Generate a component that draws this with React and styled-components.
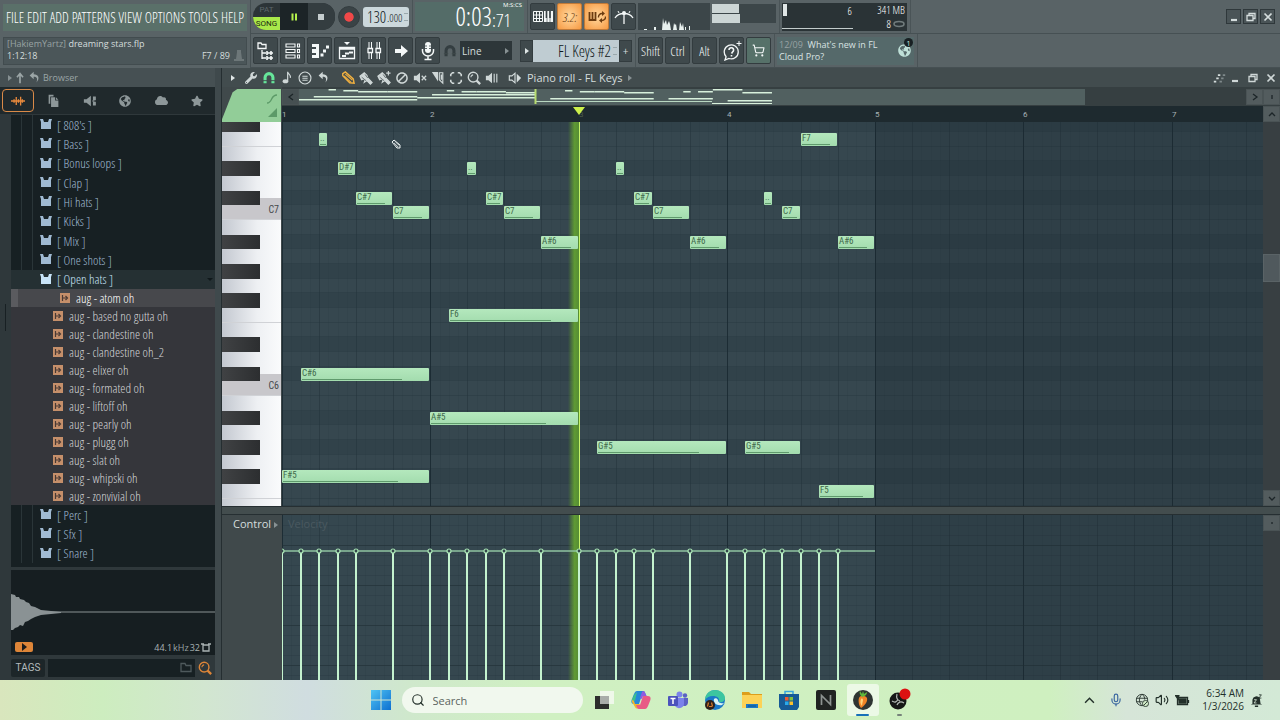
import React, { useState } from 'react';
import styled, { createGlobalStyle } from 'styled-components';
import { FaWrench, FaStar, FaCloud, FaGlobeAmericas, FaBan } from 'react-icons/fa';
import { LuSearch, LuMic, LuVolume2, LuShoppingCart } from 'react-icons/lu';

const ROW = 44 / 3;
const BAR = 593 / 4;
const STEP = BAR / 16;
const FIRST_ROW = 10;
const NAMES = ['F', 'E', 'D#', 'D', 'C#', 'C', 'B', 'A#', 'A', 'G#', 'G', 'F#'];

const rowTop = (n) => Math.round(FIRST_ROW + n * ROW);
const stepX = (s) => Math.round(s * STEP);

// row: semitones below F7, start and length in 16ths of a bar
const notes = [
  { row: 0, start: 4, length: 1 },
  { row: 2, start: 6, length: 2, name: 'D#7' },
  { row: 4, start: 8, length: 4, name: 'C#7' },
  { row: 5, start: 12, length: 4, name: 'C7' },
  { row: 2, start: 20, length: 1 },
  { row: 4, start: 22, length: 2, name: 'C#7' },
  { row: 5, start: 24, length: 4, name: 'C7' },
  { row: 7, start: 28, length: 4, name: 'A#6' },
  { row: 12, start: 18, length: 14, name: 'F6' },
  { row: 16, start: 2, length: 14, name: 'C#6' },
  { row: 19, start: 16, length: 16, name: 'A#5' },
  { row: 23, start: 0, length: 16, name: 'F#5' },
  { row: 2, start: 36, length: 1 },
  { row: 4, start: 38, length: 2, name: 'C#7' },
  { row: 5, start: 40, length: 4, name: 'C7' },
  { row: 7, start: 44, length: 4, name: 'A#6' },
  { row: 21, start: 34, length: 14, name: 'G#5' },
  { row: 21, start: 50, length: 6, name: 'G#5' },
  { row: 4, start: 52, length: 1 },
  { row: 5, start: 54, length: 2, name: 'C7' },
  { row: 0, start: 56, length: 4, name: 'F7' },
  { row: 7, start: 60, length: 4, name: 'A#6' },
  { row: 24, start: 58, length: 6, name: 'F5' },
];

const velocities = [0, 2, 4, 6, 8, 12, 16, 18, 20, 22, 24, 28, 32, 34, 36, 38, 40, 44, 48, 50, 52, 54, 56, 58, 60];

const lanes = Array.from({ length: 27 }, (_, i) => {
  const n = i - 1;
  const name = NAMES[(n + 12) % 12];
  const top = Math.max(0, rowTop(n));
  const bottom = Math.min(384, rowTop(n + 1));
  return { id: i, name, black: name.includes('#'), height: bottom - top, octave: n < 6 ? 7 : n < 18 ? 6 : 5 };
});

const foldersAbove = ["808's", 'Bass', 'Bonus loops', 'Clap', 'Hi hats', 'Kicks', 'Mix', 'One shots', 'Open hats'];
const foldersBelow = ['Perc', 'Sfx', 'Snare'];
const samples = [
  'atom oh', 'based no gutta oh', 'clandestine oh', 'clandestine oh_2', 'elixer oh', 'formated oh',
  'liftoff oh', 'pearly oh', 'plugg oh', 'slat oh', 'whipski oh', 'zonvivial oh',
];
const menus = ['FILE', 'EDIT', 'ADD', 'PATTERNS', 'VIEW', 'OPTIONS', 'TOOLS', 'HELP'];

const Svg = ({ size = 16, w, h, box = '0 0 16 16', children, ...rest }) => (
  <svg width={w || size} height={h || size} viewBox={box} fill="none" stroke="currentColor" strokeWidth="1.3" aria-hidden="true" {...rest}>
    {children}
  </svg>
);

const icons = {
  browser: (
    <Svg size={20} box="0 0 20 20">
      <path d="M2 2h3l1 1.500h4v4H2z" />
      <path d="M6 9v9M6 12h4M6 17h4" />
      <path d="M11 10v4M11 12h6M15 10v4M11 15v4M11 17h6M15 15v4" strokeWidth="1.600" />
    </Svg>
  ),
  rack: (
    <Svg size={20} box="0 0 20 20">
      <path d="M3 3h9v3H3zM3 8.500h9v3H3zM3 14h9v3H3zM14.500 3h2v3h-2zM14.500 8.500h2v3h-2zM14.500 14h2v3h-2z" strokeWidth="1.100" />
    </Svg>
  ),
  piano: (
    <Svg size={20} box="0 0 20 20">
      <path d="M2 3h7v14H2v-3h4v-2H2V8h4V6H2z" fill="currentColor" stroke="none" />
      <path d="M10.500 14h3M13 10h3M16 6h3" strokeWidth="3" />
    </Svg>
  ),
  playlist: (
    <Svg size={20} box="0 0 20 20">
      <path d="M7 1h6l-3 3z" fill="currentColor" stroke="none" />
      <path d="M2.500 6.500h15v11h-15zM2.500 8h15" />
      <path d="M5 15h4M8 12.500h4M12 11.500h4" strokeWidth="1.800" />
    </Svg>
  ),
  mixer: (
    <Svg size={20} box="0 0 20 20">
      <path d="M5 1v6M5 12v6M7.500 1v6M7.500 12v6M13 1v6M13 12v6M15.500 1v6M15.500 12v6" strokeWidth="1" />
      <path d="M4 7.500h4.500v4H4zM12 7.500h4.500v4H12z" />
    </Svg>
  ),
  arrow: (
    <Svg size={20} box="0 0 20 20">
      <path d="M4 8h6V4l7 6-7 6v-4H4z" fill="currentColor" stroke="none" />
    </Svg>
  ),
  mic: (
    <Svg size={20} box="0 0 20 20">
      <rect x="7" y="1" width="6" height="11" rx="3" fill="currentColor" stroke="none" />
      <path d="M4.500 8v2a5.500 5 0 0 0 11 0V8M10 15v3M6.500 18.500h7" strokeWidth="1.500" />
      <path d="M7 5h2M7 7.500h2M11 5h2M11 7.500h2" stroke="#3a4448" strokeWidth=".8" />
    </Svg>
  ),
  typing: (
    <Svg w={20} h={12} box="0 0 20 12">
      <path d="M.5.5h9v10h-9zM3.500.5v10M6.500.5v10M.5 4h9M.5 7.500h9" strokeWidth="1" />
      <path d="M11 0h9v11h-9z" fill="currentColor" stroke="none" />
      <path d="M13.500 0v7M17 0v7" stroke="#364044" strokeWidth="1.700" />
      <path d="M14 7v4M17 7v4" stroke="#364044" strokeWidth=".6" />
    </Svg>
  ),
  blend: (
    <Svg w={18} h={12} box="0 0 18 12">
      <path d="M1.500 1v8h6V1M4.500 1v8" strokeWidth="1.800" />
      <path d="M10.500 6.500a3.500 3.500 0 0 1 3.500-4h1M17.500 5.500a3.500 3.500 0 0 1-3.500 4h-1" strokeWidth="1.400" />
      <path d="M14 0l3 2.500L14 5zM14 7l-3 2.500 3 2.500z" fill="currentColor" stroke="none" />
    </Svg>
  ),
  metro: (
    <Svg w={20} h={16} box="0 0 20 16">
      <path d="M1 9a10 8 0 0 1 18 0M10 3v12" />
      <circle cx="10" cy="4" r="2" fill="currentColor" stroke="none" />
      <path d="M5 4l-1-2M15 4l1-2" strokeWidth="1" />
    </Svg>
  ),
  help: (
    <Svg size={20} box="0 0 20 20">
      <path d="M4 16l-1 3 4-1.500a7 7 0 1 0-3-2z" />
      <path d="M7 9a2.300 2.300 0 1 1 3.500 2L9.500 12.500M9.500 14v1.500" strokeWidth="1.600" />
      <path d="M17 0v5M14.500 2.500h5" strokeWidth="1" />
    </Svg>
  ),
  magnet: (
    <Svg size={14}>
      <path d="M3.500 14V7.500a4.500 4.500 0 0 1 9 0V14" strokeWidth="3.500" />
      <path d="M1 11h5M10 11h5" stroke="#3f494c" strokeWidth="1" />
    </Svg>
  ),
  undo: (
    <Svg size={13}>
      <path d="M7 1L2 5.500 7 10V7c4 0 5 2 3.500 7C15 9 13 4 7 4z" fill="currentColor" stroke="none" />
    </Svg>
  ),
  up: (
    <Svg size={12}>
      <path d="M8 15V4M4 7l4-5 4 5" strokeWidth="2.200" />
    </Svg>
  ),
  note: (
    <Svg size={13}>
      <ellipse cx="5.500" cy="12.500" rx="3.500" ry="2.500" fill="currentColor" stroke="none" />
      <path d="M8.200 12V1c.5 3 4.500 3.500 3.300 7.500" strokeWidth="1.500" />
    </Svg>
  ),
  stamp: (
    <Svg size={14}>
      <circle cx="8" cy="8" r="6.800" />
      <path d="M5 6h6M5 8.300h6M5 10.600h6" />
    </Svg>
  ),
  pencil: (
    <Svg size={14}>
      <path d="M2 3l3-2 9 8 1 5-5-.5-8-8z" strokeWidth="1.600" />
      <path d="M3.500 5.500l8 7.500M5 3.500l8 7" />
    </Svg>
  ),
  brush: (
    <Svg size={14}>
      <path d="M1 6l5-4 3 3 1 3 5 5-2 2-4-4-3 2 1-3-2-1-2 1z" fill="currentColor" />
      <path d="M3 7l5 4M7 4l3 4" stroke="#3f494c" strokeWidth=".8" />
    </Svg>
  ),
  brushPlus: (
    <Svg size={14}>
      <path d="M1 6l5-4 3 3 1 3 5 5-2 2-4-4-3 2 1-3-2-1-2 1z" fill="currentColor" />
      <path d="M13 0v5M10.500 2.500h5" />
      <path d="M3 7l5 4M7 4l3 4" stroke="#3f494c" strokeWidth=".8" />
    </Svg>
  ),
  mute: (
    <Svg size={14}>
      <path d="M1 5.500h3L8 2v12l-4-3.500H1z" fill="currentColor" stroke="none" />
      <path d="M10 5.500l5 5M15 5.500l-5 5" strokeWidth="1.500" />
    </Svg>
  ),
  slice: (
    <Svg size={14}>
      <path d="M1 1h7v11z" fill="currentColor" stroke="none" />
      <path d="M9.500 2h4v12l-4-4z" />
      <path d="M11 4h2v6h-2z" fill="currentColor" stroke="none" />
    </Svg>
  ),
  select: (
    <Svg size={14}>
      <path d="M2 6V4l2-2h2M10 2h2l2 2v2M14 10v2l-2 2h-2M6 14H4l-2-2v-2" strokeWidth="1.800" />
    </Svg>
  ),
  zoom: (
    <Svg size={14}>
      <circle cx="7" cy="7" r="5.500" strokeWidth="1.600" />
      <path d="M4.500 7A2.500 2.500 0 0 1 7 4.500" />
      <path d="M11 11l4 4" strokeWidth="2.600" />
    </Svg>
  ),
  playback: (
    <Svg size={14}>
      <path d="M1 5.500h3L8 2v12l-4-3.500H1z" fill="currentColor" stroke="none" />
      <path d="M10.500 3v10M13.500 3v10" />
    </Svg>
  ),
  speaker: (
    <Svg size={14}>
      <path d="M1.500 5.500h3L8 2.500v11L4.500 10.500h-3z" />
      <path d="M10 3l5 5-5 5z" fill="currentColor" stroke="none" />
    </Svg>
  ),
  files: (
    <Svg size={13}>
      <path d="M2 1h6v2H4v9H2zM5 4h5v4h4v8H5zM11 4l3 3h-3z" fill="currentColor" stroke="none" />
    </Svg>
  ),
  plugin: (
    <Svg size={14}>
      <path d="M1 6h3l5-4v12l-5-4H1z" fill="currentColor" stroke="none" />
      <path d="M10.500 8h2.500M12 3.500h2v3h-2zM12 9.500h2v3h-2z" fill="currentColor" />
    </Svg>
  ),
  wave: (
    <Svg size={14}>
      <path d="M0 8h16M3.500 6v4M6 3.500v9M8.500 6v4M11 3v10M13 6v4" strokeWidth="1.500" />
    </Svg>
  ),
  restore: (
    <Svg size={10} box="0 0 10 10">
      <path d="M3 3V1.500h6v5H7M1 3.500h6v5H1z" />
    </Svg>
  ),
  close: (
    <Svg size={10} box="0 0 10 10">
      <path d="M1.500 1.500l7 7M8.500 1.500l-7 7" strokeWidth="1.700" />
    </Svg>
  ),
  minimize: (
    <Svg size={10} box="0 0 10 10">
      <path d="M2 8h6" strokeWidth="2.200" />
    </Svg>
  ),
};

const FolderIcon = () => (
  <Svg w={12} h={11} box="0 0 12 11">
    <path d="M0 0h3l1 3h4l1-3h3l-1 3v7H1V3z" fill="currentColor" stroke="none" />
  </Svg>
);

const SampleIcon = () => (
  <Svg size={10} box="0 0 10 10">
    <path d="M0 0h10v10H0z" fill="#c58f6a" stroke="none" />
    <path d="M2.500 2v6M5.500 3l2 2-2 2M2.500 5h4" stroke="#4a3a34" strokeWidth="1.200" />
  </Svg>
);

const Minimap = () => (
  <svg width="475" height="16" viewBox="0 0 475 16" aria-hidden="true">
    {notes.map((n) => (
      <rect key={`${n.row}-${n.start}`} x={n.start * 7.39} y={Math.round(n.row * 0.44)} width={n.length * 7.39} height="1.500" fill="#d8f0dc" />
    ))}
    <path d="M237 12.500h176" stroke="#b9d8c2" />
    <path d="M413 14.500h60" stroke="#d8f0dc" />
    <path d="M236.500 0v15" stroke="#b8dc70" strokeWidth="2" />
  </svg>
);

const GridLines = ({ rows }) => (
  <Lines aria-hidden="true">
    {Array.from({ length: 106 }, (_, i) => (
      <line
        key={i}
        x1={stepX(i) + 0.5}
        x2={stepX(i) + 0.5}
        y1="0"
        y2="100%"
        stroke={i % 16 === 0 ? '#1b2a32' : '#22313a'}
        strokeOpacity={i % 16 === 0 ? 0.9 : i % 4 === 0 ? 0.5 : 0.12}
      />
    ))}
    {rows && Array.from({ length: 16 }, (_, i) => (
      <line key={`r${i}`} x1="0" x2="100%" y1={i * 10 + 10.5} y2={i * 10 + 10.5} stroke="#1f2e36" strokeOpacity={i % 4 === 2 ? 0.6 : 0.2} />
    ))}
  </Lines>
);

const Velocities = () => (
  <Lines aria-hidden="true">
    <path d="M0 36H593" stroke="#8fc3a0" strokeWidth="1.500" />
    {velocities.map((s) => (
      <g key={s}>
        <line x1={stepX(s)} x2={stepX(s)} y1="38" y2="100%" stroke="#c4f3cf" strokeWidth="2" />
        <circle cx={stepX(s)} cy="36" r="2" fill="#33454b" stroke="#a6e2b2" strokeWidth="1.200" />
      </g>
    ))}
  </Lines>
);

const App = () => {
  const [mode, setMode] = useState('SONG');
  const [tempo, setTempo] = useState('130');
  const [selected, setSelected] = useState('atom oh');
  const [query, setQuery] = useState('');
  const [tag, setTag] = useState('');

  return (
    <Page>
      <GlobalStyle />
      <Header>
        <HeaderLeft>
          <MenuBar>
            {menus.map((menu) => <MenuItem key={menu}>{menu}</MenuItem>)}
          </MenuBar>
          <HintPanel>
            <HintText>
              <div><Dim>[HakiemYartz]</Dim> dreaming stars.flp</div>
              <HintLine><span>1:12:18</span><span>F7 / 89</span></HintLine>
            </HintText>
            <Svg w={10} h={13} box="0 0 10 13"><path d="M3 1h4v2l1 7h2v2H0v-2h2l1-7z" fill="#6d7779" stroke="none" /></Svg>
          </HintPanel>
        </HeaderLeft>
        <HeaderRows>
          <HeaderRow>
            <Group>
              <Transport>
                <ModeSwitch onClick={() => setMode(mode === 'SONG' ? 'PAT' : 'SONG')}>
                  <Mode $on={mode === 'PAT'}>PAT</Mode>
                  <Mode $on={mode === 'SONG'}>SONG</Mode>
                </ModeSwitch>
                <TransportButton $active aria-label="Pause">
                  <Svg size={10} box="0 0 10 10"><path d="M3.500 1.500v7M7 1.500v7" strokeWidth="2" /></Svg>
                </TransportButton>
                <TransportButton aria-label="Stop">
                  <Svg size={10} box="0 0 10 10"><path d="M2 2h6v6H2z" fill="currentColor" stroke="none" /></Svg>
                </TransportButton>
              </Transport>
              <Record aria-label="Record" />
              <Tempo>
                <TempoInput aria-label="Tempo" value={tempo} onChange={(e) => setTempo(e.target.value)} />
                <small>.000</small>
                <Spin />
              </Tempo>
            </Group>
            <Group>
              <Clock>
                <span>0:03</span>
                <ClockEnd><sup>M:S:CS</sup><small>:71</small></ClockEnd>
              </Clock>
            </Group>
            <Group $tight>
              <Tool aria-label="Typing keyboard">{icons.typing}</Tool>
              <Tool $lit aria-label="Countdown"><Count>3.2:</Count></Tool>
              <Tool $lit aria-label="Blend recording">{icons.blend}</Tool>
              <Tool aria-label="Metronome">{icons.metro}</Tool>
              <Scope>
                <svg width="72" height="27" viewBox="0 0 72 27" aria-hidden="true">
                  <path d="M6 27v-1h3v1zM16 27v-3h2v3zM24 27l1-12 1 6 2-4 1 5 2-4 1 3 1 6zM35 27l1-7 1 2 1-1 1 6zM41 27l1-8 2 5 1-4 1 7zM47 27v-3h1v3zM51 27v-4h1v4z" fill="#e8f0ee" />
                </svg>
              </Scope>
              <Meters><Meter $size="42%" /><Meter $size="44%" /></Meters>
            </Group>
            <Group>
              <Cpu>
                <CpuGraph><b /><span>6</span></CpuGraph>
                <CpuText><span>341 MB</span><span>8 <Svg w={12} h={8} box="0 0 12 8"><ellipse cx="6" cy="4" rx="5" ry="2.500" stroke="#707b7c" strokeWidth="1.600" /></Svg></span></CpuText>
              </Cpu>
            </Group>
            <Windows>
              <WindowButton aria-label="Minimize">{icons.minimize}</WindowButton>
              <WindowButton aria-label="Restore">{icons.restore}</WindowButton>
              <WindowButton aria-label="Close">{icons.close}</WindowButton>
            </Windows>
          </HeaderRow>
          <HeaderRow>
            <Group $tight>
              {['browser', 'rack', 'piano', 'playlist', 'mixer', 'arrow', 'mic'].map((name) => (
                <Tool key={name} aria-label={name}>{icons[name]}</Tool>
              ))}
              <SnapIcon>{icons.magnet}</SnapIcon>
              <Snap>
                <select aria-label="Snap"><option>Line</option></select>
                <Caret />
              </Snap>
              <Channel>
                <ChannelStep aria-label="Channel menu"><Caret $bright /></ChannelStep>
                <ChannelName>FL Keys #2<Spin /></ChannelName>
                <ChannelStep aria-label="Add channel">+</ChannelStep>
              </Channel>
            </Group>
            <Group $tight>
              <Tool>Shift</Tool>
              <Tool>Ctrl</Tool>
              <Tool>Alt</Tool>
              <Tool aria-label="Help">{icons.help}</Tool>
              <Tool $teal aria-label="Shop"><LuShoppingCart size={13} /></Tool>
            </Group>
            <Group>
              <News href="#news">
                <span><Dim>12/09</Dim>&nbsp; What&apos;s new in FL<br />Cloud Pro?</span>
                <Globe><FaGlobeAmericas size={13} /><i>1</i></Globe>
              </News>
            </Group>
          </HeaderRow>
        </HeaderRows>
      </Header>

      <Main>
        <Browser>
          <BrowserTitle><Caret />{icons.up}{icons.undo}<span>Browser</span></BrowserTitle>
          <Tabs>
            <Tab $active aria-label="All">{icons.wave}</Tab>
            <Tab aria-label="Project">{icons.files}</Tab>
            <Tab aria-label="Plugins">{icons.plugin}</Tab>
            <Tab aria-label="Online"><FaGlobeAmericas size={12} /></Tab>
            <Tab aria-label="Cloud"><FaCloud size={13} /></Tab>
            <Tab aria-label="Starred"><FaStar size={12} /></Tab>
          </Tabs>
          <BrowserBody>
            <Strip><StripThumb /></Strip>
            <BrowserContent>
              <Tree>
                <Folders $first>
                  {foldersAbove.map((name) => (
                    <Folder key={name} $open={name === 'Open hats'}>
                      <FolderIcon />[ {name} ]{name === 'Open hats' && <OpenMark />}
                    </Folder>
                  ))}
                </Folders>
                <Samples>
                  {samples.map((name) => (
                    <Sample key={name} $active={name === selected} onClick={() => setSelected(name)}>
                      <SampleIcon />aug - {name}
                    </Sample>
                  ))}
                </Samples>
                <Folders>
                  {foldersBelow.map((name) => <Folder key={name}><FolderIcon />[ {name} ]</Folder>)}
                </Folders>
              </Tree>
              <Preview>
                <svg width="100%" height="84" aria-hidden="true">
                  <path d="M0 24l4 1 1 2 3 0 1 2 4 1 2 2 3 1 2 3 4 1 6 3 10 1 10 1v1l-10 1-10 1-6 2-4 2-3 2-3 1-2 4-3-1-2 2-3 1-2 2-2 0z" fill="#8a9294" />
                  <line x1="0" x2="100%" y1="42" y2="42" stroke="#8a9294" />
                </svg>
                <PreviewBar>
                  <Play aria-label="Play"><Svg size={8} box="0 0 8 8"><path d="M2 0l5 4-5 4z" fill="#1b1b1b" stroke="none" /></Svg></Play>
                  <Rate>44.1 <Dim>kHz</Dim><span>32</span><Svg w={10} h={9} box="0 0 10 9"><path d="M2 2h6v6H2zM0 1h3M7 1h3" /></Svg></Rate>
                </PreviewBar>
              </Preview>
              <TagBar>
                <TagButton>TAGS</TagButton>
                <TagField>
                  <input aria-label="Filter tags" value={tag} onChange={(e) => setTag(e.target.value)} />
                  <Svg w={12} h={11} box="0 0 12 11"><path d="M1 1.500h4l1 2h5v6H1z" /></Svg>
                </TagField>
                <TagSearch aria-label="Search">{icons.zoom}</TagSearch>
              </TagBar>
            </BrowserContent>
          </BrowserBody>
        </Browser>

        <Roll>
          <RollTitle>
            <Caret $bright />
            <RollTools>
              <IconButton aria-label="Tools"><FaWrench size={12} /></IconButton>
              <IconButton $color="#66e69a" aria-label="Snap to grid">{icons.magnet}</IconButton>
              <IconButton aria-label="Note">{icons.note}</IconButton>
              <IconButton aria-label="Stamp">{icons.stamp}</IconButton>
              <IconButton aria-label="Undo">{icons.undo}</IconButton>
            </RollTools>
            <RollTools>
              <IconButton $color="#f0b040" aria-label="Draw">{icons.pencil}</IconButton>
              <IconButton aria-label="Paint">{icons.brush}</IconButton>
              <IconButton aria-label="Paint drums">{icons.brushPlus}</IconButton>
              <IconButton aria-label="Delete"><FlipIcon><FaBan size={12} /></FlipIcon></IconButton>
              <IconButton aria-label="Mute">{icons.mute}</IconButton>
              <IconButton aria-label="Slice">{icons.slice}</IconButton>
              <IconButton aria-label="Select">{icons.select}</IconButton>
              <IconButton aria-label="Zoom">{icons.zoom}</IconButton>
              <IconButton aria-label="Playback">{icons.playback}</IconButton>
            </RollTools>
            <RollTools>{icons.speaker}</RollTools>
            <RollName>Piano roll - FL Keys</RollName>
            <Caret />
            <RollWindow>
              <Svg size={13}><path d="M1 13h3M4 9h3M6 5h3" strokeWidth="2" /><path d="M8 13h3M10 9h3M12 5h3" stroke="#7f898b" strokeWidth="2" /></Svg>
              <IconButton aria-label="Minimize roll">{icons.minimize}</IconButton>
              <IconButton aria-label="Restore roll">{icons.restore}</IconButton>
              <IconButton aria-label="Close roll">{icons.close}</IconButton>
            </RollWindow>
          </RollTitle>
          <RollTop>
            <Corner>
              <Svg size={10} box="0 0 10 10"><path d="M0 9c6 0 3-8 10-8" stroke="#5c9a68" /></Svg>
              <Svg size={9} box="0 0 10 10"><path d="M10 0v10H0z" fill="#5c9a68" stroke="none" /></Svg>
            </Corner>
            <RollTopRight>
              <MapBar>
                <ScrollButton aria-label="Scroll left"><Svg size={8} box="0 0 8 8"><path d="M6 1L2 4l4 3" stroke="#1c2528" /></Svg></ScrollButton>
                <MapTrack><MapView><Minimap /></MapView></MapTrack>
                <ScrollButton $raised aria-label="Scroll right"><Svg size={8} box="0 0 8 8"><path d="M2 1l4 3-4 3" stroke="#1c2528" /></Svg></ScrollButton>
                <ScrollButton $raised aria-label="Zoom horizontally"><Svg size={8} box="0 0 8 8"><path d="M4 2v4" stroke="#1c2528" /></Svg></ScrollButton>
              </MapBar>
              <RulerRow>
                <Ruler>
                  {[1, 2, 3, 4, 5, 6, 7].map((bar) => (
                    <BarNumber key={bar} $hidden={bar === 3} style={{ left: stepX((bar - 1) * 16) }}>{bar}</BarNumber>
                  ))}
                  <PlayMarker />
                </Ruler>
                <ScrollButton $raised aria-label="Scroll up"><Svg size={8} box="0 0 8 8"><path d="M1 6l3-3 3 3" stroke="#1c2528" /></Svg></ScrollButton>
              </RulerRow>
            </RollTopRight>
          </RollTop>
          <RollBody>
            <Keys>
              {lanes.map((lane) => (
                <Key key={lane.id} $name={lane.name} $height={lane.height}>
                  {lane.name === 'C' && <span>C{lane.octave}</span>}
                </Key>
              ))}
            </Keys>
            <Canvas>
              {lanes.map((lane) => <Lane key={lane.id} $black={lane.black} $height={lane.height} />)}
              <GridLines />
              <Beyond />
              <Playhead />
              {notes.map((n) => (
                <Note
                  key={`${n.row}-${n.start}`}
                  style={{ left: stepX(n.start), top: rowTop(n.row) + 1, width: stepX(n.start + n.length) - stepX(n.start) - 1 }}
                >
                  {n.name || '..'}
                </Note>
              ))}
              <Cursor>
                <Svg size={10} box="0 0 10 10">
                  <path d="M1 3l2-2 6 5v3H6z" stroke="#eef4f4" strokeWidth="1" fill="#46555c" />
                  <path d="M3 4l4 4M4.500 3l3.500 3" stroke="#eef4f4" strokeWidth=".7" />
                </Svg>
              </Cursor>
            </Canvas>
            <VerticalScroll>
              <VerticalThumb />
              <ScrollButton $raised aria-label="Scroll down"><Svg size={8} box="0 0 8 8"><path d="M1 3l3 3 3-3" stroke="#1c2528" /></Svg></ScrollButton>
            </VerticalScroll>
          </RollBody>
          <Splitter />
          <ControlBody>
            <ControlLabel>Control <Caret /></ControlLabel>
            <ControlCanvas>
              <GridLines rows />
              <Beyond />
              <VelocityName>Velocity</VelocityName>
              <Playhead />
              <Velocities />
            </ControlCanvas>
            <VerticalScroll>
              <ScrollButton $raised aria-label="Zoom control"><Svg size={8} box="0 0 8 8"><path d="M4 3v2" stroke="#1c2528" /></Svg></ScrollButton>
            </VerticalScroll>
          </ControlBody>
        </Roll>
      </Main>

      <Taskbar>
        <span />
        <TaskCenter>
          <TaskButton aria-label="Start">
            <svg width="20" height="20" viewBox="0 0 20 20" aria-hidden="true">
              <defs><linearGradient id="win" x2="1" y2="1"><stop stopColor="#4fc4f4" /><stop offset="1" stopColor="#0d6fd0" /></linearGradient></defs>
              <path d="M0 0h9.500v9.500H0zM10.500 0H20v9.500h-9.500zM0 10.500h9.500V20H0zM10.500 10.500H20V20h-9.500z" fill="url(#win)" />
            </svg>
          </TaskButton>
          <SearchBox>
            <LuSearch size={14} />
            <input aria-label="Search" placeholder="Search" value={query} onChange={(e) => setQuery(e.target.value)} />
          </SearchBox>
          <TaskButton aria-label="Task view">
            <svg width="20" height="20" viewBox="0 0 20 20" aria-hidden="true"><path d="M1 6h14v13H1z" fill="#2c2e2c" /><path d="M6 1h14v13H6z" fill="#f6faf4" fillOpacity=".8" /><path d="M6 6h9v8H6z" fill="#a9ada9" /></svg>
          </TaskButton>
          <TaskButton aria-label="Copilot">
            <svg width="20" height="20" viewBox="0 0 20 20" aria-hidden="true">
              <path d="M6 1h6c2 0 2 2 3 4h-4L8 14H3c-3 0-3-3-2-5l2-5c1-2 1.500-3 3-3z" fill="#2587d8" />
              <path d="M2 8l2 6h5l-1 3c-1 2-3 2-4 0L1 12c0-1 0-3 1-4z" fill="#f0b72e" />
              <path d="M14 19H8c-2 0-2-2-3-4h4l3-9h5c3 0 3 3 2 5l-2 5c-1 2-1.500 3-3 3z" fill="#e85a86" />
              <path d="M12 1c2 0 2 2 3 4l1 1h-4l-1 3-2-1 2-6z" fill="#8f5be0" />
              <path d="M3 5l3-3-2 9-3-1z" fill="#3cc08c" />
            </svg>
          </TaskButton>
          <TaskButton aria-label="Teams">
            <svg width="20" height="20" viewBox="0 0 20 20" aria-hidden="true">
              <circle cx="17" cy="5.500" r="2.200" fill="#5b62c4" /><circle cx="11.500" cy="4.500" r="3" fill="#7b83eb" />
              <path d="M14 8h6v5a3.500 3.500 0 0 1-6 2z" fill="#5b62c4" /><path d="M7 8h9v6a5 5 0 0 1-9 2z" fill="#7b83eb" />
              <rect x="0" y="6" width="10" height="10" rx="1" fill="#4b53bc" /><path d="M2.500 8.500h5M5 8.500v5.500" stroke="#fff" strokeWidth="1.500" />
            </svg>
          </TaskButton>
          <TaskButton aria-label="Edge">
            <svg width="20" height="20" viewBox="0 0 20 20" aria-hidden="true">
              <circle cx="10" cy="10" r="10" fill="#1b78c8" />
              <path d="M0 10C0 4 5 0 10 0c6 0 10 4 10 8 0 3-3 5-6 4 1-4-2-6-6-6-4 0-7 2-8 4z" fill="#3cc5a0" />
              <path d="M9 9c-1 4 3 7 8 6l3-3c-1 2-7 2-7-2-1-2-3-2-4-1z" fill="#d9f3f3" />
              <circle cx="5" cy="15" r="5" fill="#2e211c" /><path d="M3.500 12.500l-1 4M6.500 12.500l1 4M4 16.500h3" stroke="#d77b2c" strokeWidth="1.200" />
            </svg>
          </TaskButton>
          <TaskButton aria-label="Explorer">
            <svg width="20" height="20" viewBox="0 0 20 20" aria-hidden="true"><path d="M0 2h7l2 2h11v5H0z" fill="#dd9e1c" /><path d="M0 5h20v13H0z" fill="#fcd257" /><path d="M4 14h12v4H4z" fill="#1c78c4" /><path d="M6 16h8" stroke="#0c528e" /></svg>
          </TaskButton>
          <TaskButton aria-label="Store">
            <svg width="20" height="20" viewBox="0 0 20 20" aria-hidden="true"><path d="M6 5V1.500h8V5" fill="none" stroke="#38a5dc" strokeWidth="1.500" /><path d="M0 4h20v13l-2 3H2l-2-3z" fill="#165b96" /><path d="M6 7h3.500v3.500H6z" fill="#ee5a32" /><path d="M10.500 7H14v3.500h-3.500z" fill="#82c23c" /><path d="M6 11.500h3.500V15H6z" fill="#2aa9ea" /><path d="M10.500 11.500H14V15h-3.500z" fill="#fbc12c" /></svg>
          </TaskButton>
          <TaskButton aria-label="Notion">
            <svg width="20" height="20" viewBox="0 0 20 20" aria-hidden="true"><rect width="20" height="20" rx="2" fill="#202322" /><path d="M5.500 15V5.500l9 9V5" fill="none" stroke="#8d9391" strokeWidth="1.700" /></svg>
          </TaskButton>
          <TaskButton $active aria-label="FL Studio">
            <svg width="20" height="20" viewBox="0 0 20 20" aria-hidden="true"><circle cx="10" cy="10" r="10" fill="#2f3532" /><path d="M6 8c1-3 6-3 8 0 1 4-3 8-6 10-2-2-3-7-2-10z" fill="#f08426" /><path d="M8 9c1-1 2 0 2 1s-1 4-1 6c-2-2-2-5-1-7z" fill="#ffd47a" /><path d="M9 7C7 5 6 3 7 1l2 3 1-3 1 3 3-2c0 3-2 4-5 5z" fill="#5fb83b" /></svg>
          </TaskButton>
          <TaskButton $running aria-label="OBS">
            <svg width="22" height="24" viewBox="0 0 22 24" aria-hidden="true"><circle cx="9" cy="13" r="8.500" fill="#161816" /><path d="M8 6c-1 4 0 6 3 7M15 15c-3-2-6-1-7 2M3 13c3 2 5 1 6-2" stroke="#b5bbb6" fill="none" strokeWidth="1.200" /><circle cx="16" cy="6" r="5.500" fill="#dc1111" /></svg>
          </TaskButton>
        </TaskCenter>
        <Tray>
          <Svg size={11} box="0 0 10 10"><path d="M1 7l4-4 4 4" /></Svg>
          <MicTray><LuMic size={14} /></MicTray>
          <TrayIcons>
            <Svg size={14}><circle cx="8" cy="8" r="6.500" strokeWidth="1" /><path d="M1.500 6h13M1.500 10h7M8 1.500c-4 4-4 9 0 13M8 1.500c3 2 3 4 3 6" strokeWidth="1" /><circle cx="12" cy="12" r="3.500" fill="#cfe9c6" strokeWidth="1" /><path d="M10 14l4-4" strokeWidth="1" /></Svg>
            <LuVolume2 size={14} />
            <Svg w={15} h={11} box="0 0 15 11"><path d="M2.500 2.500h10v7h-10zM13.500 5v3" /><path d="M4 4h7v4H4zM0 0h4L3 4z" fill="currentColor" /></Svg>
          </TrayIcons>
          <TrayIcons>
            <DateTime>6:34 AM<br />1/3/2026</DateTime>
            <Svg size={13}><path d="M3 12V7a5 5 0 0 1 9-2l1 7 2 1H1zM6 14h4v2H6z" fill="currentColor" stroke="none" /><path d="M11 1h3l-3 4h3" strokeWidth="1" /><path d="M5 7h3l-3 4h3" stroke="#d8e6d8" strokeWidth="1" /></Svg>
          </TrayIcons>
        </Tray>
      </Taskbar>
    </Page>
  );
};

export default App;

const GlobalStyle = createGlobalStyle`
  * {
    box-sizing: border-box;
  }
  body {
    margin: 0;
    background: #3f494c;
    font-family: 'Open Sans', 'Noto Sans', sans-serif;
    font-size: 10px;
    color: #d5dddd;
  }
  button, input, select {
    font: inherit;
    color: inherit;
    border: 0;
    padding: 0;
    margin: 0;
    background: none;
  }
  svg {
    display: block;
    flex: none;
  }
  ul {
    list-style: none;
    margin: 0;
    padding: 0;
  }
`;

const narrow = `
  font-family: 'Open Sans Condensed Light', 'Noto Sans Condensed', 'Roboto Condensed', 'Liberation Sans Narrow', sans-serif;
`;

const Page = styled.div`
  display: flex;
  flex-direction: column;
  min-height: 100vh;
`;

const Header = styled.header`
  display: flex;
  background: #596366;
`;

const HeaderLeft = styled.div`
  display: flex;
  flex-direction: column;
  gap: 6px;
  width: 251px;
  padding: 4px 3px 3px;
  border-right: 1px solid #465053;
`;

const MenuBar = styled.nav`
  display: flex;
  align-items: center;
  justify-content: space-between;
  height: 27px;
  padding: 0 3px;
  background: #5a7069;
`;

const MenuItem = styled.button`
  ${narrow}
  font-size: 14px;
  color: #ffffff;
`;

const HintPanel = styled.div`
  display: flex;
  align-items: flex-end;
  gap: 4px;
  height: 28px;
  padding: 0 2px 2px 3px;
  background: #4b5659;
  border: 1px solid #424c4f;
  font-size: 9px;
  line-height: 12px;
`;

const HintText = styled.div`
  flex: 1;
`;

const HintLine = styled.div`
  display: flex;
  justify-content: space-between;
`;

const Dim = styled.span`
  color: #98a2a3;
`;

const HeaderRows = styled.div`
  flex: 1;
`;

const HeaderRow = styled.div`
  display: flex;
  height: 34px;
  border-bottom: 1px solid #465053;
`;

const Group = styled.div`
  display: flex;
  align-items: center;
  gap: ${({ $tight }) => ($tight ? 2 : 3)}px;
  padding: 0 3px 0 2px;
  border-right: 1px solid #4a5457;
`;

const Transport = styled.div`
  display: flex;
  height: 27px;
  width: 82px;
  border-radius: 13px;
  overflow: hidden;
  background: #2c3437;
`;

const ModeSwitch = styled.button`
  width: 27px;
  display: flex;
  flex-direction: column;
`;

const Mode = styled.span`
  flex: 1;
  width: 100%;
  font-family: Roboto, sans-serif;
  font-size: 8px;
  line-height: 13px;
  background: ${({ $on }) => ($on ? '#a9e94a' : 'transparent')};
  color: ${({ $on }) => ($on ? '#1d2a12' : '#5d676a')};
`;

const TransportButton = styled.button`
  flex: 1;
  display: grid;
  place-items: center;
  background: ${({ $active }) => ($active ? '#1c2427' : '#343d40')};
  color: ${({ $active }) => ($active ? '#b4f04c' : '#c5cdce')};
`;

const Record = styled.button`
  width: 22px;
  height: 22px;
  border-radius: 50%;
  background: radial-gradient(circle, #f04848 30%, #3a4346 36%);
  border: 1px solid #333c3f;
`;

const Tempo = styled.div`
  display: flex;
  align-items: center;
  width: 46px;
  height: 20px;
  padding-left: 4px;
  border-radius: 3px;
  background: #ccd8dc;
  color: #10181b;
  ${narrow}

  small {
    font-size: 11px;
    padding-top: 2px;
  }
`;

const TempoInput = styled.input`
  width: 20px;
  font-size: 16px;
`;

const Spin = styled.i`
  width: 4px;
  height: 8px;
  margin-left: 2px;
  border: solid #9aa8ac;
  border-width: 1px 0;
`;

const Clock = styled.div`
  display: flex;
  justify-content: flex-end;
  width: 109px;
  height: 29px;
  padding-right: 2px;
  background: #546c68;
  color: #ffffff;
  ${narrow}
  font-size: 26px;
  line-height: 29px;
`;

const ClockEnd = styled.div`
  display: flex;
  flex-direction: column;
  width: 30px;

  sup {
    font: 6px/6px 'Open Sans', sans-serif;
    text-align: right;
  }
  small {
    font-size: 19px;
    line-height: 24px;
  }
`;

const Tool = styled.button`
  display: grid;
  place-items: center;
  width: 25px;
  height: 27px;
  border: 1px solid ${({ $lit }) => ($lit ? '#c07a38' : '#333c3f')};
  border-radius: 2px;
  ${narrow}
  font-size: 13px;
  background: ${({ $lit, $teal }) => ($lit ? 'radial-gradient(#ffd9a0, #f79a42)' : $teal ? '#567169' : '#3f494c')};
  color: ${({ $lit }) => ($lit ? '#6b3c10' : '#f4f8f8')};
`;

const Count = styled.span`
  font-style: italic;
`;

const Scope = styled.div`
  width: 72px;
  height: 27px;
  background: #3c4649;
`;

const Meters = styled.div`
  display: flex;
  flex-direction: column;
  gap: 1px;
  align-self: flex-start;
  width: 64px;
  height: 19px;
  margin-top: 4px;
  background: #3c4649;
`;

const Meter = styled.div`
  flex: 1;
  width: ${({ $size }) => $size};
  background: #ccd5d5;
`;

const Cpu = styled.div`
  display: flex;
  width: 125px;
  height: 28px;
  background: #2a3336;
  color: #ffffff;
  ${narrow}
  font-size: 11px;
`;

const CpuGraph = styled.div`
  display: flex;
  justify-content: space-between;
  width: 71px;
  height: 26px;
  padding: 1px;
  border-bottom: 1px solid #c3cccc;
  line-height: 14px;

  b {
    width: 4px;
    height: 12px;
    background: #dfe6e6;
  }
`;

const CpuText = styled.div`
  flex: 1;
  display: flex;
  flex-direction: column;
  align-items: flex-end;
  padding-right: 2px;
  line-height: 14px;

  svg {
    display: inline-block;
  }
`;

const Windows = styled.div`
  display: flex;
  align-items: center;
  gap: 2px;
  margin-left: auto;
  padding-right: 5px;
`;

const WindowButton = styled.button`
  display: grid;
  place-items: center;
  width: 15px;
  height: 15px;
  border: 1px solid #2f383b;
  background: #4a5457;
`;

const SnapIcon = styled.span`
  display: grid;
  place-items: center;
  width: 16px;
  color: #343e41;
`;

const Snap = styled.label`
  display: flex;
  align-items: center;
  width: 52px;
  height: 19px;
  padding: 0 3px 0 2px;
  background: #2d3639;

  select {
    flex: 1;
    appearance: none;
  }
`;

const Caret = styled.i`
  display: inline-block;
  width: 0;
  border-left: 4px solid ${({ $bright }) => ($bright ? '#dfe6e6' : '#879193')};
  border-top: 3px solid transparent;
  border-bottom: 3px solid transparent;
`;

const Channel = styled.div`
  display: flex;
  height: 22px;
  margin-left: 6px;
`;

const ChannelStep = styled.button`
  display: grid;
  place-items: center;
  width: 13px;
  background: #3f494c;
  border: 1px solid #333c3f;
`;

const ChannelName = styled.button`
  display: flex;
  align-items: center;
  justify-content: flex-end;
  width: 86px;
  padding-right: 2px;
  background: #bfccd2;
  color: #10181b;
  ${narrow}
  font-size: 16px;
  line-height: 22px;
`;

const News = styled.a`
  display: flex;
  justify-content: space-between;
  align-items: center;
  width: 137px;
  height: 28px;
  padding: 0 3px 0 2px;
  background: #55696a;
  color: #d9e2e2;
  font-size: 9px;
  line-height: 12px;
  text-decoration: none;
`;

const Globe = styled.span`
  position: relative;
  color: #bfe0d8;

  i {
    position: absolute;
    top: -6px;
    right: -2px;
    width: 9px;
    border-radius: 50%;
    background: #182023;
    font-size: 8px;
    font-style: normal;
    line-height: 9px;
    text-align: center;
  }
`;

const Main = styled.main`
  display: flex;
  flex: 1;
`;

const Browser = styled.aside`
  display: flex;
  flex-direction: column;
  width: 215px;
  background: #2f383b;
`;

const BrowserTitle = styled.div`
  display: flex;
  align-items: center;
  gap: 2px;
  height: 19px;
  padding-left: 8px;
  background: #465053;
  color: #9ba5a6;
  font-size: 9px;
`;

const Tabs = styled.div`
  display: flex;
  gap: 4px;
  height: 27px;
  padding: 2px;
  background: #20292c;
`;

const Tab = styled.button`
  display: grid;
  place-items: center;
  width: 32px;
  border: 1px solid ${({ $active }) => ($active ? '#d98a48' : 'transparent')};
  border-radius: 4px;
  color: ${({ $active }) => ($active ? '#e8893c' : '#8d9799')};
`;

const BrowserBody = styled.div`
  display: flex;
  flex: 1;
  padding-top: 1px;
`;

const Strip = styled.div`
  width: 11px;
  padding: 189px 5px 0;
`;

const StripThumb = styled.div`
  height: 27px;
  background: #182023;
`;

const BrowserContent = styled.div`
  display: flex;
  flex-direction: column;
  flex: 1;
`;

const Tree = styled.div`
  flex: 1;
  background: #172023;
  ${narrow}
  font-size: 13px;
`;

const Folders = styled.ul`
  display: grid;
  grid-auto-rows: 1fr;
  height: ${({ $first }) => ($first ? '174px' : '58px')};
  background: linear-gradient(90deg, transparent 10px, #2a3538 10px 11px, transparent 11px 21px, #2a3538 21px 22px, transparent 22px);
`;

const Folder = styled.li`
  display: flex;
  align-items: center;
  gap: 5px;
  padding: 0 2px 0 29px;
  background: ${({ $open }) => ($open ? '#253033' : 'none')};
  color: ${({ $open }) => ($open ? '#c8e4f8' : '#a0bad2')};
`;

const OpenMark = styled.i`
  margin-left: auto;
  border: 3px solid transparent;
  border-top-color: #10181b;
  border-bottom: 0;
`;

const Samples = styled.ul`
  background: #35363b;
`;

const Sample = styled.li`
  display: flex;
  align-items: center;
  gap: 6px;
  height: 18px;
  padding-left: ${({ $active }) => ($active ? 49 : 42)}px;
  background: ${({ $active }) => ($active ? 'linear-gradient(90deg, #5a5b5f 7px, #47484c 7px)' : 'none')};
  color: ${({ $active }) => ($active ? '#ffffff' : '#d4d5d7')};
  cursor: pointer;
`;

const Preview = styled.div`
  height: 85px;
  margin-top: 3px;
  background: #161e21;
`;

const PreviewBar = styled.div`
  display: flex;
  justify-content: space-between;
  align-items: center;
  height: 14px;
  margin-top: -14px;
  padding: 0 4px;
  color: #a9b2b3;
  font-size: 9px;
`;

const Rate = styled.span`
  display: flex;
  align-items: center;
  gap: 1px;
`;

const Play = styled.button`
  display: grid;
  place-items: center;
  width: 18px;
  height: 10px;
  border-radius: 2px;
  background: #dd8538;
`;

const TagBar = styled.div`
  display: flex;
  align-items: center;
  gap: 3px;
  height: 25px;
`;

const TagButton = styled.button`
  width: 34px;
  height: 18px;
  border-radius: 2px;
  background: #1d2629;
  font-family: Roboto, sans-serif;
  color: #b3bbbc;
`;

const TagField = styled.div`
  display: flex;
  align-items: center;
  flex: 1;
  height: 18px;
  padding-right: 3px;
  background: #172023;
  color: #4e595c;

  input {
    width: 100%;
  }
`;

const TagSearch = styled.button`
  padding: 0 3px 0 0;
  color: #dd8538;
`;

const Roll = styled.section`
  display: flex;
  flex-direction: column;
  flex: 1;
  min-width: 0;
  margin-left: 6px;
  border-left: 1px solid #252e31;
  background: #40494b;
`;

const RollTitle = styled.div`
  display: flex;
  align-items: center;
  height: 19px;
  padding-left: 9px;
  background: #424c4e;
`;

const RollTools = styled.div`
  display: flex;
  margin-left: 7px;
`;

const IconButton = styled.button`
  display: grid;
  place-items: center;
  width: 18px;
  color: ${({ $color }) => $color || '#cfd7d7'};
`;

const FlipIcon = styled.span`
  transform: scaleX(-1);
`;

const RollName = styled.span`
  padding: 0 5px;
  font-size: 11px;
`;

const RollWindow = styled.div`
  display: flex;
  align-items: center;
  margin-left: auto;
`;

const RollTop = styled.div`
  display: flex;
  height: 35px;
`;

const Corner = styled.div`
  display: flex;
  flex-direction: column;
  justify-content: space-between;
  align-items: flex-end;
  width: 59px;
  margin-top: 2px;
  padding: 5px 4px;
  background: #92cd98;
  clip-path: polygon(26% 0, 100% 0, 100% 100%, 0 100%, 0 92%, 18% 10%);
`;

const RollTopRight = styled.div`
  flex: 1;
  min-width: 0;
  padding-left: 1px;
`;

const MapBar = styled.div`
  display: flex;
  height: 19px;
  padding: 2px 0 1px;
  background: #363f41;
`;

const MapTrack = styled.div`
  flex: 1;
  background: #363f41;
`;

const MapView = styled.div`
  width: 83%;
  height: 100%;
  background: #516060;
`;

const ScrollButton = styled.button`
  display: grid;
  place-items: center;
  width: 17px;
  height: 16px;
  border: 1px solid #4a5355;
  background: ${({ $raised }) => ($raised ? '#535c5e' : '#465052')};
`;

const RulerRow = styled.div`
  display: flex;
  height: 16px;
`;

const Ruler = styled.div`
  position: relative;
  flex: 1;
  background: #1e2a2f;
`;

const BarNumber = styled.span`
  position: absolute;
  bottom: 2px;
  font-family: Roboto, sans-serif;
  font-size: 8px;
  line-height: 10px;
  color: ${({ $hidden }) => ($hidden ? '#4d5c4a' : '#a9b4b6')};
`;

const PlayMarker = styled.i`
  position: absolute;
  left: 291px;
  top: 1px;
  border: 6px solid transparent;
  border-top: 8px solid #cdf04c;
  border-bottom: 0;
`;

const RollBody = styled.div`
  display: flex;
  height: 384px;
`;

const Keys = styled.div`
  width: 59px;
  background: linear-gradient(90deg, #c3c8d0, #eef0f3 60%, #fafbfc);
`;

const Key = styled.div`
  position: relative;
  height: ${({ $height }) => $height}px;
  border-bottom: ${({ $name }) => ($name === 'C' || $name === 'F' ? '1px solid #d0d2d6' : '0')};
  background: ${({ $name }) => ($name.includes('#')
    ? 'linear-gradient(90deg, #404244, #2c2e30) 0 0 / 38px 100% no-repeat'
    : $name === 'C' ? '#c8c7cb' : 'none')};

  span {
    position: absolute;
    right: 0;
    bottom: 0;
    width: 21px;
    height: 21px;
    padding-right: 2px;
    background: #c8c7cb;
    color: #45474b;
    font-family: 'Liberation Sans Narrow', 'Roboto Condensed', Roboto, sans-serif;
    line-height: 24px;
    text-align: right;
  }
`;

const Canvas = styled.div`
  position: relative;
  flex: 1;
  overflow: hidden;
  margin-left: 1px;
`;

const Lane = styled.div`
  height: ${({ $height }) => $height}px;
  border-bottom: 1px solid #2f4048;
  background: ${({ $black }) => ($black ? '#31424a' : '#36474f')};
`;

const Lines = styled.svg`
  position: absolute;
  inset: 0;
  width: 100%;
  height: 100%;
`;

const Beyond = styled.div`
  position: absolute;
  inset: 0 0 0 593px;
  border-left: 1px solid #1b2a32;
  background: rgba(28, 40, 48, 0.25);
`;

const Playhead = styled.div`
  position: absolute;
  top: 0;
  bottom: 0;
  left: 286px;
  width: 12px;
  border-right: 1px solid #c6f56a;
  background: linear-gradient(90deg, rgba(90, 150, 40, 0), #5f9a34 60%, #558c34);
`;

const Note = styled.div`
  position: absolute;
  height: 13px;
  padding-left: 1px;
  overflow: hidden;
  border-radius: 1px;
  background: linear-gradient(#b4e8bd, #a3dcae);
  color: #40684a;
  font-family: 'Liberation Sans Narrow', 'Roboto Condensed', Roboto, sans-serif;
  font-size: 9px;
  line-height: 10px;

  &::after {
    content: '';
    position: absolute;
    left: 1px;
    bottom: 1px;
    width: 78%;
    height: 1px;
    background: #5f9a6c;
  }
`;

const Cursor = styled.div`
  position: absolute;
  left: 109px;
  top: 17px;
`;

const VerticalScroll = styled.div`
  display: flex;
  flex-direction: column;
  width: 17px;
  background: #383f42;
`;

const VerticalThumb = styled.div`
  height: 28px;
  margin: 132px 0 auto;
  background: #50595d;
  border: 1px solid #5a6366;
`;

const Splitter = styled.div`
  height: 9px;
  background: #434d4e;
  border-top: 1px solid #262f32;
  border-bottom: 1px solid #262f32;
`;

const ControlBody = styled.div`
  display: flex;
  flex: 1;
`;

const ControlLabel = styled.div`
  width: 59px;
  padding: 1px 2px 0 11px;
  font-size: 11px;
  white-space: nowrap;
`;

const ControlCanvas = styled.div`
  position: relative;
  flex: 1;
  margin-left: 1px;
  background: #35474f;
`;

const VelocityName = styled.span`
  position: absolute;
  left: 6px;
  top: 1px;
  font-size: 11px;
  color: #4a5960;
`;

const Taskbar = styled.footer`
  display: grid;
  grid-template-columns: 1fr auto 1fr;
  align-items: center;
  height: 40px;
  background: linear-gradient(90deg, #d9e6bd, #cdedbf 8%, #d2e6d0 16%, #d0dde0 24%, #cfe8cc 32%, #d0f0c2 42%, #cff0c0 82%, #d6e5d8 88%, #d3e9d6);
  color: #23302a;
`;

const TaskCenter = styled.div`
  display: flex;
  align-items: center;
  gap: 5px;
`;

const TaskButton = styled.button`
  position: relative;
  display: grid;
  place-items: center;
  width: 32px;
  height: 32px;
  border-radius: 3px;
  background: ${({ $active }) => ($active ? 'rgba(255, 255, 255, 0.6)' : 'none')};

  &::after {
    content: '';
    position: absolute;
    bottom: 0;
    width: ${({ $active, $running }) => ($active ? '13px' : $running ? '5px' : '0')};
    height: 2px;
    border-radius: 1px;
    background: ${({ $active }) => ($active ? '#1670b8' : '#76827a')};
  }
`;

const SearchBox = styled.label`
  display: flex;
  align-items: center;
  gap: 8px;
  width: 181px;
  height: 26px;
  padding-left: 9px;
  border-radius: 13px;
  background: #f1f8ee;

  input {
    width: 120px;
    font-size: 11px;
    outline: 0;
  }
  input::placeholder {
    color: #5b645e;
  }
`;

const Tray = styled.div`
  display: flex;
  align-items: center;
  justify-content: flex-end;
  gap: 12px;
  padding-right: 17px;
`;

const MicTray = styled.span`
  margin-left: 2px;
  color: #3a66a0;
`;

const TrayIcons = styled.div`
  display: flex;
  align-items: center;
  gap: 6px;
`;

const DateTime = styled.time`
  font-size: 10px;
  line-height: 13px;
  text-align: right;
`;
